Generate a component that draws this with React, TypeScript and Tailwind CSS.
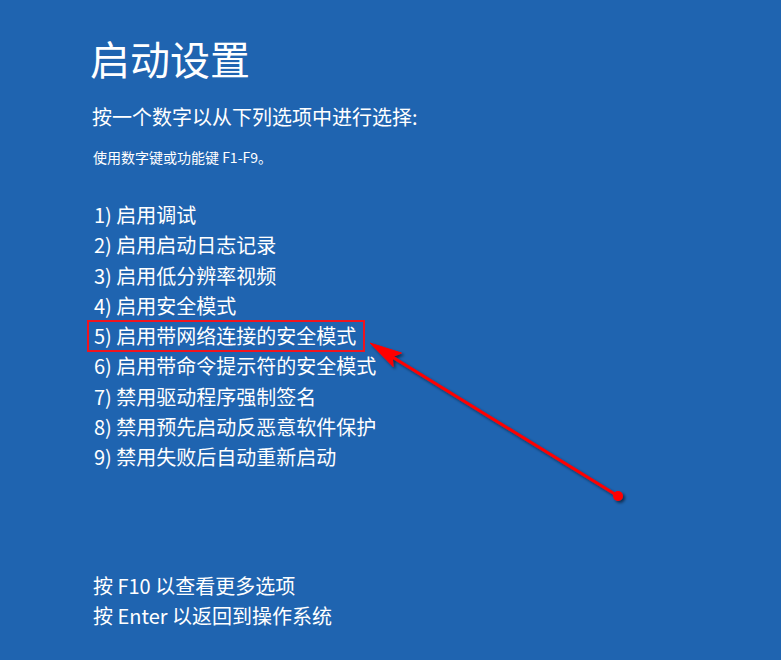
import React from "react";

const options = [
  "1) 启用调试",
  "2) 启用启动日志记录",
  "3) 启用低分辨率视频",
  "4) 启用安全模式",
  "5) 启用带网络连接的安全模式",
  "6) 启用带命令提示符的安全模式",
  "7) 禁用驱动程序强制签名",
  "8) 禁用预先启动反恶意软件保护",
  "9) 禁用失败后自动重新启动",
];

const App: React.FC = () => {
  return (
    <div
      className="relative w-full h-screen overflow-hidden bg-[#1f64b0] text-white pl-[90px]"
      style={{ fontFamily: '"Noto Sans CJK SC", sans-serif' }}
    >
      <h1 className="pt-[34px] text-[40px] leading-[48px] font-normal">启动设置</h1>
      <p className="mt-[21px] ml-[2px] text-[20px] leading-[28px]">
        按一个数字以从下列选项中进行选择:
      </p>
      <p className="mt-[16px] ml-[3px] text-[14px] leading-[20px]">
        使用数字键或功能键 F1-F9。
      </p>

      <ul className="mt-[33px] ml-[4px] text-[20px] leading-[30.25px]">
        {options.map((o) => (
          <li key={o}>{o}</li>
        ))}
      </ul>

      <div className="mt-[99px] ml-[3px] text-[20px] leading-[30px]">
        <p>按 F10 以查看更多选项</p>
        <p>按 Enter 以返回到操作系统</p>
      </div>

      {/* annotation */}
      <div className="absolute left-[87px] top-[320px] w-[278px] h-[32px] border-2 border-[#f0141e]" />
      <svg
        className="absolute inset-0 pointer-events-none"
        width="781"
        height="660"
        viewBox="0 0 781 660"
      >
        <defs>
          <filter id="sh" x="-20%" y="-20%" width="140%" height="140%">
            <feDropShadow dx="2" dy="2" stdDeviation="1.5" floodColor="#000" floodOpacity="0.55" />
          </filter>
        </defs>
        <g filter="url(#sh)" fill="#ff0000" stroke="#ff0000">
          <line x1="618" y1="496" x2="392" y2="356.7" strokeWidth="3" />
          <polygon points="370,343 393.1,366.6 392.2,356.7 401.5,353" strokeWidth="1" strokeLinejoin="round" />
          <circle cx="618" cy="496" r="5" stroke="none" />
        </g>
      </svg>
    </div>
  );
};

export default App;
